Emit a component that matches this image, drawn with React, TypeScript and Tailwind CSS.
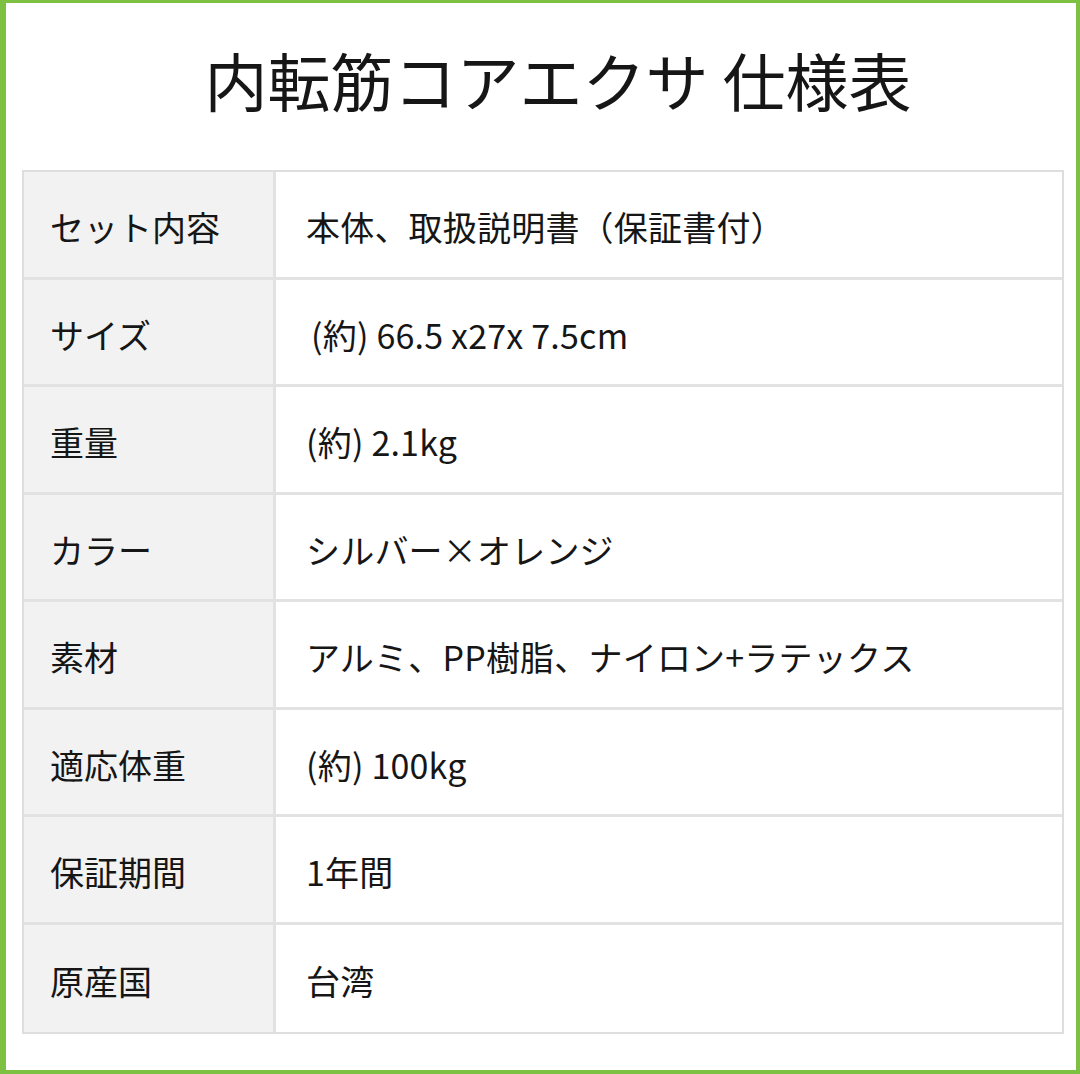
import React from "react";

const rows: [string, string, string?][] = [
  ["セット内容", "本体、取扱説明書（保証書付）"],
  ["サイズ", "(約) 66.5 x27x 7.5cm", "pl-[35px]"],
  ["重量", "(約) 2.1kg"],
  ["カラー", "シルバー×オレンジ"],
  ["素材", "アルミ、PP樹脂、ナイロン+ラテックス"],
  ["適応体重", "(約) 100kg"],
  ["保証期間", "1年間"],
  ["原産国", "台湾"],
];

export default function App() {
  return (
    <div
      className="w-[1080px] h-[1074px] bg-white border-l-[6px] border-t-[3px] border-r-[4px] border-b-[4px] border-[#7cc142] flex flex-col text-[#161616]"
      style={{ fontFamily: '"Noto Sans CJK JP", "Noto Sans", sans-serif' }}
    >
      <div className="h-[167px] flex items-center justify-center pl-[34px] pb-[16px]">
        <h1 className="text-[63px] leading-none font-normal">内転筋コアエクサ 仕様表</h1>
      </div>
      <div className="ml-[16px] w-[1042px] border-2 border-[#dedede] flex flex-col">
        {rows.map(([label, value, extra], i) => (
          <div
            key={label}
            className={`flex h-[107.5px] ${i < rows.length - 1 ? "border-b-[3px] border-[#e2e2e2]" : ""}`}
          >
            <div className="w-[252px] bg-[#f2f2f2] border-r-[3px] border-[#e2e2e2] flex items-center pl-[26px] pt-[5px] text-[34px]">
              {label}
            </div>
            <div className={`flex-1 flex items-center pt-[5px] text-[34px] tracking-[0.2px] ${extra ?? "pl-[30px]"}`}>{value}</div>
          </div>
        ))}
      </div>
    </div>
  );
}
